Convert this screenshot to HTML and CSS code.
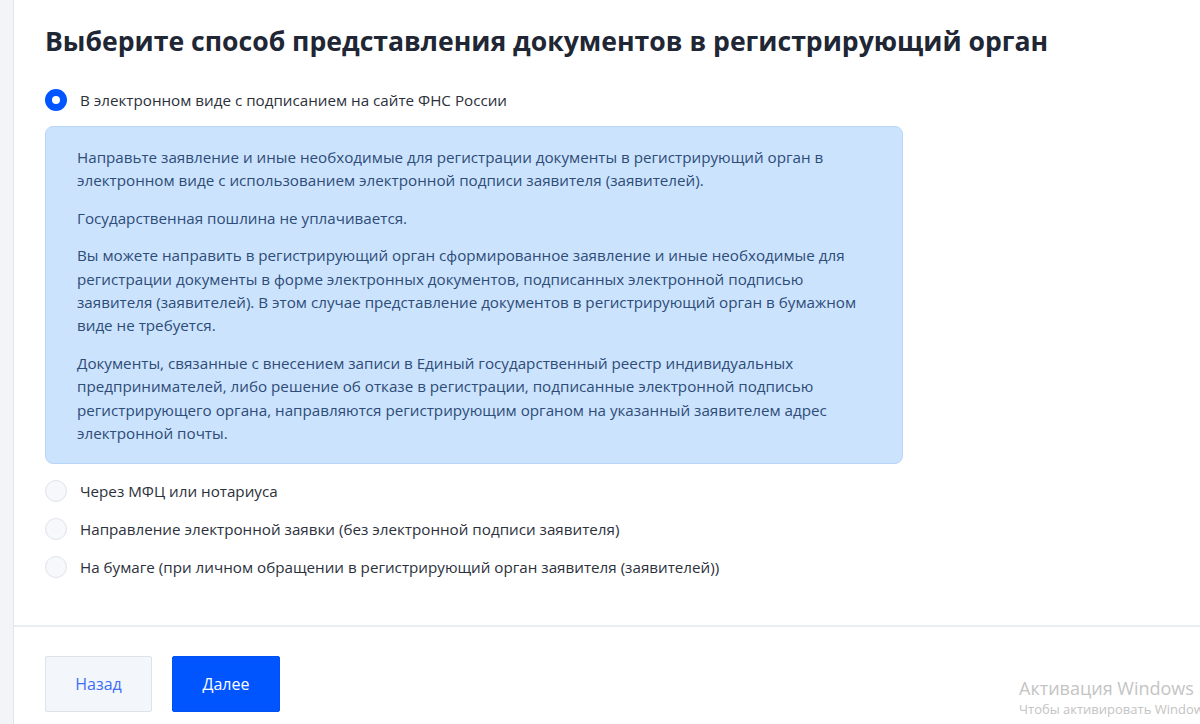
FILE: index.html
```html
<!DOCTYPE html>
<html lang="ru">
<head>
<meta charset="utf-8">
<title>Способ представления документов</title>
<link rel="stylesheet" href="styles.css">
</head>
<body>
<div class="page">
  <aside class="sidebar"></aside>
  <main class="main">
    <section class="content">
      <h1 class="title">Выберите способ представления документов в регистрирующий орган</h1>
      <div class="options">
        <label class="option">
          <span class="radio radio--checked"></span>
          <span class="option-text">В электронном виде с подписанием на сайте ФНС России</span>
        </label>
        <div class="info">
          <p>Направьте заявление и иные необходимые для регистрации документы в регистрирующий орган в электронном виде с использованием электронной подписи заявителя (заявителей).</p>
          <p>Государственная пошлина не уплачивается.</p>
          <p>Вы можете направить в регистрирующий орган сформированное заявление и иные необходимые для регистрации документы в форме электронных документов, подписанных электронной подписью заявителя (заявителей). В этом случае представление документов в регистрирующий орган в бумажном виде не требуется.</p>
          <p>Документы, связанные с внесением записи в Единый государственный реестр индивидуальных предпринимателей, либо решение об отказе в регистрации, подписанные электронной подписью регистрирующего органа, направляются регистрирующим органом на указанный заявителем адрес электронной почты.</p>
        </div>
        <label class="option">
          <span class="radio"></span>
          <span class="option-text">Через МФЦ или нотариуса</span>
        </label>
        <label class="option">
          <span class="radio"></span>
          <span class="option-text">Направление электронной заявки (без электронной подписи заявителя)</span>
        </label>
        <label class="option">
          <span class="radio"></span>
          <span class="option-text">На бумаге (при личном обращении в регистрирующий орган заявителя (заявителей))</span>
        </label>
      </div>
    </section>
    <footer class="footer">
      <button class="btn btn--secondary">Назад</button>
      <button class="btn btn--primary">Далее</button>
    </footer>
  </main>
</div>
<div class="watermark">
  <div class="wm-title">Активация Windows</div>
  <div class="wm-sub">Чтобы активировать Windows, перейдите в раздел «Параметры».</div>
</div>
</body>
</html>
```
FILE: styles.css
```css
* { box-sizing: border-box; }
html, body { margin: 0; padding: 0; }
body {
  width: 1200px;
  height: 724px;
  overflow: hidden;
  background: #ffffff;
  font-family: "Open Sans", "Noto Sans", sans-serif;
  color: #1f2533;
  position: relative;
}
.page {
  display: flex;
  height: 724px;
}
.sidebar {
  width: 14px;
  flex: none;
  background: #f2f4f7;
  border-right: 1px solid #e2e6ea;
}
.main {
  flex: 1;
  display: flex;
  flex-direction: column;
}
.content {
  padding: 23px 0 0 31px;
  height: 625px;
}
.title {
  margin: 0;
  font-size: 26.6px;
  line-height: 36px;
  font-weight: 700;
  color: #202634;
}
.options {
  margin-top: 30px;
  display: flex;
  flex-direction: column;
  gap: 16px;
  width: 858px;
}
.option {
  display: flex;
  align-items: center;
  gap: 13px;
  height: 22px;
  font-size: 15.2px;
  color: #2b303b;
}
.radio {
  width: 22px;
  height: 22px;
  border-radius: 50%;
  flex: none;
  border: 1px solid #dfe4ea;
  background: #f6f8fb;
}
.radio--checked {
  border: 7px solid #0057ff;
  background: #ffffff;
}
.info {
  margin-top: -1px;
  background: #cce3fd;
  border: 1px solid #b9d6f7;
  border-radius: 8px;
  padding: 19px 28px 18px 31px;
  color: #2d4c77;
  font-size: 15.2px;
  line-height: 23.4px;
}
.info p { margin: 0 0 14px 0; }
.info p:last-child { margin-bottom: 0; }
.footer {
  border-top: 2px solid #e9edf0;
  padding: 29px 0 0 31px;
  display: flex;
  gap: 20px;
}
.btn {
  height: 56px;
  width: 107px;
  font-family: "Open Sans", "Noto Sans", sans-serif;
  font-size: 16px;
  border-radius: 2px;
  cursor: pointer;
}
.btn--secondary {
  background: #f3f6fb;
  border: 1px solid #dde3ea;
  color: #3d6ef5;
}
.btn--primary {
  background: #0055ff;
  border: 1px solid #0052f5;
  color: #ffffff;
  width: 108px;
}
.watermark {
  position: absolute;
  left: 1019px;
  top: 677px;
  white-space: nowrap;
  color: #c4c4c4;
  font-family: "Open Sans", "Noto Sans", sans-serif;
}
.wm-title { font-size: 18px; line-height: 22px; }
.wm-sub { font-size: 13px; line-height: 20px; }
```
